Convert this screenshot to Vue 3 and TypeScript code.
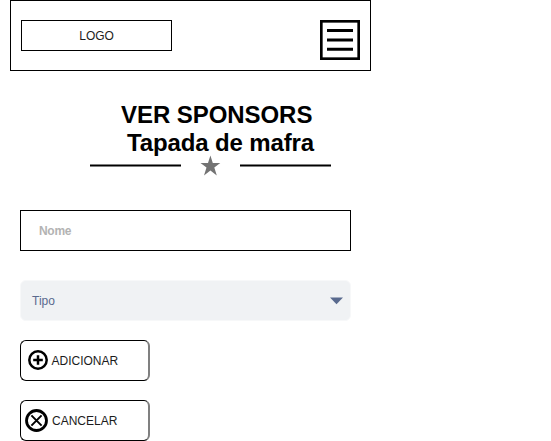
<script setup lang="ts">
import { ref } from 'vue'

const title = 'VER SPONSORS'
const subtitle = 'Tapada de mafra'
const name = ref('')
</script>

<template>
  <main class="screen">
    <header class="topbar">
      <div class="logo">LOGO</div>
      <button class="menu" type="button">
        <svg width="40" height="40" viewBox="0 0 40 40">
          <rect x="1.3" y="1.3" width="37.4" height="37.4" fill="#fff" stroke="#000" stroke-width="2.7" />
          <path d="M7 10.6H33M7 20H33M7 29.2H33" stroke="#000" stroke-width="3" />
        </svg>
      </button>
    </header>

    <section class="heading">
      <h1>{{ title }}</h1>
      <h2>{{ subtitle }}</h2>
      <svg class="divider" width="241" height="22" viewBox="0 0 241 22">
        <path d="M0 11.5H91M150 11.5H241" stroke="#000" stroke-width="2" />
        <path
          d="M120.4 1.6L122.8 8.9H130.3L124.3 13.4L126.8 21.4L120.4 16.6L114 21.4L116.5 13.4L110.5 8.9H118Z"
          fill="#737373"
        />
      </svg>
    </section>

    <form class="form" @submit.prevent>
      <input v-model="name" class="field" type="text" placeholder="Nome" />
      <div class="select">
        <span>Tipo</span>
        <svg width="14" height="8" viewBox="0 0 14 8">
          <path d="M0 0.5H13L6.5 7.2Z" fill="#596a8e" />
        </svg>
      </div>
      <button class="action add" type="button">
        <svg width="20" height="20" viewBox="0 0 20 20" fill="none" stroke="#000">
          <circle cx="10" cy="10" r="8.7" stroke-width="2.5" />
          <path d="M10 5.2V14.8M5.2 10H14.8" stroke-width="2.5" />
        </svg>
        <span>ADICIONAR</span>
      </button>
      <button class="action cancel" type="button">
        <svg width="23" height="23" viewBox="0 0 23 23" fill="none" stroke="#000">
          <circle cx="11.5" cy="11.5" r="10" stroke-width="2.8" />
          <path d="M6.4 6.4L16.6 16.6M16.6 6.4L6.4 16.6" stroke-width="2" />
        </svg>
        <span>CANCELAR</span>
      </button>
    </form>
  </main>
</template>

<style>
body {
  background: #fff;
}
</style>

<style scoped>
.screen {
  box-sizing: border-box;
  width: 371px;
  padding-left: 10px;
  font: 12px/14px "Liberation Sans", Arial, sans-serif;
  color: #000;
}
.topbar {
  box-sizing: border-box;
  display: flex;
  justify-content: space-between;
  align-items: flex-start;
  height: 71px;
  padding: 19px 10px 0;
  border: 1px solid #000;
}
.logo {
  box-sizing: border-box;
  display: flex;
  align-items: center;
  justify-content: center;
  width: 151px;
  height: 31px;
  border: 1px solid #000;
  color: #1c1c1c;
  letter-spacing: -0.1px;
}
.menu {
  padding: 0;
  border: 0;
  background: none;
}
svg {
  display: block;
  flex: none;
}
.heading {
  padding-top: 30px;
}
h1,
h2 {
  margin: 0;
  font-size: 24px;
  line-height: 28px;
  font-weight: bold;
  white-space: pre;
}
h1 {
  padding-left: 111px;
  letter-spacing: -0.06px;
}
h2 {
  padding-left: 117px;
  letter-spacing: -0.13px;
}
.divider {
  margin: -3px 0 0 80px;
}
.form {
  display: flex;
  flex-direction: column;
  align-items: flex-start;
  padding: 34px 0 0 10px;
}
.field {
  box-sizing: border-box;
  width: 331px;
  height: 41px;
  margin: 0;
  padding: 0 18px;
  border: 1px solid #000;
  border-radius: 0;
  background: #fff;
  font: bold 12px/14px "Liberation Sans", Arial, sans-serif;
  letter-spacing: -0.3px;
  outline: none;
}
.field::placeholder {
  color: #b3b3b3;
  opacity: 1;
}
.select {
  box-sizing: border-box;
  display: flex;
  align-items: center;
  justify-content: space-between;
  width: 331px;
  height: 41px;
  margin-top: 29px;
  padding: 1px 6px 0 11px;
  border: 1px solid #f7f8f9;
  border-radius: 6px;
  background: #f0f2f4;
  color: #596a8e;
}
.action {
  box-sizing: border-box;
  display: flex;
  align-items: center;
  width: 130px;
  height: 41px;
  margin: 0;
  border: 1px solid #000;
  border-right: 2px solid #808080;
  border-radius: 6px;
  background: #fff;
  color: #1c1c1c;
  font: 12px/14px "Liberation Sans", Arial, sans-serif;
}
.add {
  margin-top: 19px;
  padding: 0 0 1px 7px;
  gap: 3.5px;
}
.add span {
  padding-top: 2px;
}
.cancel {
  margin-top: 19px;
  padding: 0 0 0 4px;
  gap: 4px;
}
</style>
